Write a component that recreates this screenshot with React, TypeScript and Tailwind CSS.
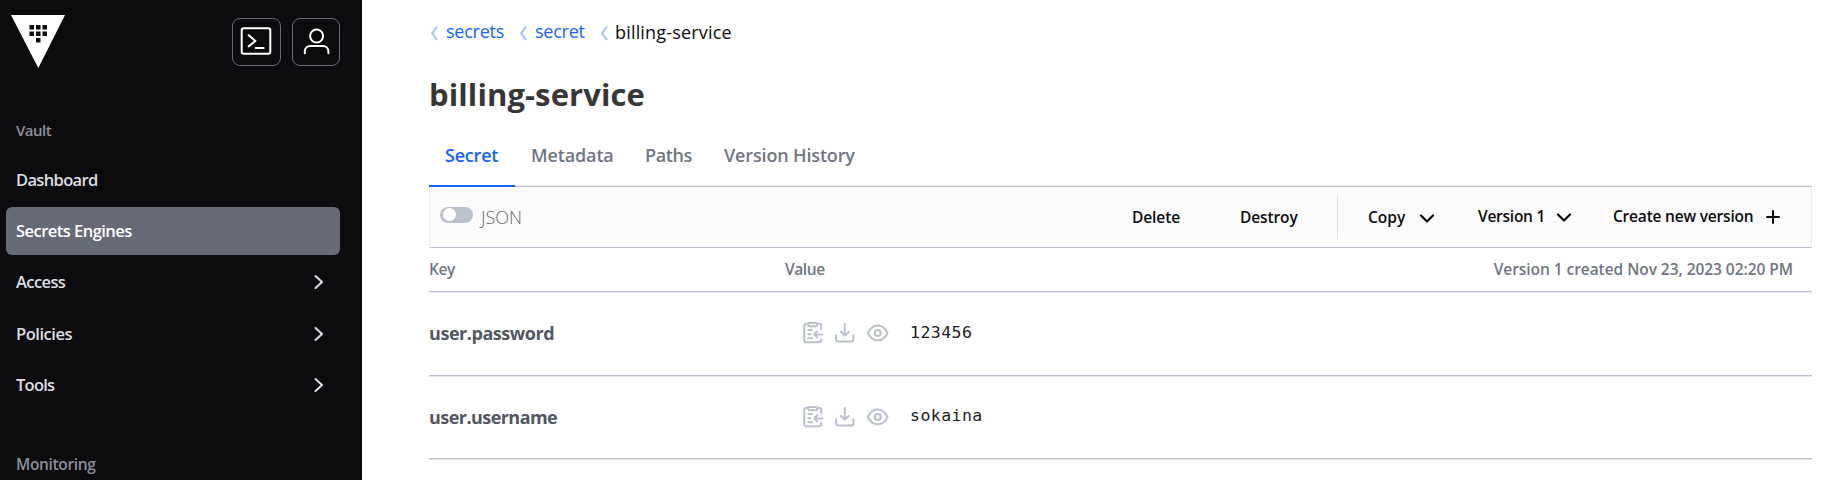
import type { ReactNode } from "react";

function Icon({ w = 24, h = 24, sw = 2, children, className = "" }: { w?: number; h?: number; sw?: number; children: ReactNode; className?: string }) {
  return (
    <svg width={w} height={h} viewBox={`0 0 ${w} ${h}`} fill="none" stroke="currentColor" strokeWidth={sw} strokeLinecap="round" strokeLinejoin="round" className={`block shrink-0 ${className}`}>
      {children}
    </svg>
  );
}

function VaultLogo() {
  const cells = [
    [18.5, 10], [25, 10], [31.5, 10],
    [18.5, 16.5], [25, 16.5], [31.5, 16.5],
    [25, 23],
  ];
  return (
    <svg width="54" height="53" viewBox="0 0 54 53" className="block">
      <path d="M0 0H54L27.3 53Z" fill="#fff" />
      {cells.map(([x, y]) => (
        <rect key={`${x}-${y}`} x={x} y={y} width="4.5" height="4.5" fill="#0c0c0e" />
      ))}
    </svg>
  );
}

function NavItem({ label, className, active, arrow }: { label: string; className: string; active?: boolean; arrow?: boolean }) {
  return (
    <a className={`flex h-12 w-[334px] shrink-0 items-center justify-between rounded-md pr-[16px] pl-[10px] text-[16.5px] leading-none font-[580] ${active ? "bg-[#656a76] text-white" : "text-[#dedfe3]"} ${className}`}>
      <span className="whitespace-nowrap">{label}</span>
      {arrow && (
        <Icon w={10} h={16} className="text-[#dedfe3]">
          <path d="M1.5 2L8 8L1.5 14" />
        </Icon>
      )}
    </a>
  );
}

function Crumb({ label, className, current }: { label: string; className: string; current?: boolean }) {
  return (
    <li className="flex items-center">
      <Icon w={9} h={16} sw={2.3} className="mt-[4px] text-[#b3c8fb]">
        <path d="M8 1.5L3.2 8.3L8 15" strokeLinecap="butt" />
      </Icon>
      <span className={`whitespace-nowrap ${current ? "pt-[2px] text-[#0c0c0e]" : "text-[#1563ff]"} ${className}`}>{label}</span>
    </li>
  );
}

function ChevronDown({ className }: { className: string }) {
  return (
    <Icon w={16} h={12} sw={2.2} className={className}>
      <path d="M2 2.5L8 8.5L14 2.5" />
    </Icon>
  );
}

function SecretRow({ name, nameClass, value, className }: { name: string; nameClass: string; value: string; className: string }) {
  return (
    <div className={`flex items-center pb-[4px] shadow-[inset_0_-1px_0_#e4e7ec,inset_0_-2px_0_#bac1cc] ${className}`}>
      <div className={`w-[372px] text-[18px] leading-none font-[680] whitespace-nowrap text-[#525761] ${nameClass}`}>{name}</div>
      <div className="flex items-center gap-2 text-[#bac1cc]">
        <Icon>
          <path d="M7.2 2.8H5.2A2 2 0 0 0 3.2 4.8V19.2A2 2 0 0 0 5.2 21.2H18.2A2 2 0 0 0 20.2 19.2V18.3M16.2 2.8H18.2A2 2 0 0 1 20.2 4.8V8.3" />
          <rect x="7.2" y="1.9" width="9" height="3.4" rx="1.4" />
          <path d="M7.3 9.1H11M7.3 13.2H9.4M7.3 17.3H11.3M21.2 13.4H13.2M16.2 10.3L13.2 13.4L16.2 16.5" />
        </Icon>
        <Icon>
          <path d="M3.1 14.2V18.6A2 2 0 0 0 5.1 20.6H18.4A2 2 0 0 0 20.4 18.6V14.2M11.8 3V14.4M7.8 10.7L11.8 14.6L15.8 10.7" />
        </Icon>
        <Icon>
          <path d="M2.9 12C5 7.4 8.4 4.6 12.7 4.6S20.4 7.4 22.5 12C20.4 16.6 17 19.3 12.7 19.3S5 16.6 2.9 12Z" />
          <circle cx="12.7" cy="12" r="3" />
        </Icon>
      </div>
      <span className="pl-[21px] font-['DejaVu_Sans_Mono',monospace] text-[16.5px] leading-none tracking-[0.45px] whitespace-nowrap text-[#1a1c20]">{value}</span>
    </div>
  );
}

export default function App() {
  return (
    <div className="flex h-[480px] w-[1843px] overflow-hidden bg-white font-['Open_Sans','Noto_Sans',sans-serif]">
      <aside className="flex w-[362px] shrink-0 flex-col overflow-hidden bg-[#0c0c0e]">
        <header className="flex h-[106px] shrink-0 items-start justify-between pr-[22px] pl-[11px]">
          <div className="pt-[15px]"><VaultLogo /></div>
          <div className="flex gap-[11px] pt-[18px] text-white">
            <button className="flex h-12 w-[49px] items-center justify-center rounded-lg border border-[#656a76]">
              <Icon w={32} h={30} className="mt-[-2px] ml-[-1px]">
                <rect x="1.7" y="2.2" width="28.6" height="25.6" rx="2" />
                <path d="M8.7 9.2L15.4 15L8.7 20.4M15.8 22H23.6" />
              </Icon>
            </button>
            <button className="flex h-12 w-12 items-center justify-center rounded-lg border border-[#656a76]">
              <Icon w={28} h={28} className="mt-[-2px]">
                <circle cx="14.6" cy="9" r="6.5" />
                <path d="M2.8 26.3V24.2A5.4 5.4 0 0 1 8.2 19H21A5.4 5.4 0 0 1 26.4 24.2V26.3" />
              </Icon>
            </button>
          </div>
        </header>
        <div className="flex h-12 shrink-0 items-center pl-[16px] text-[15px] leading-none font-[540] tracking-[-0.5px] text-[#8c909c]">Vault</div>
        <nav className="flex shrink-0 flex-col pl-[6px]">
          <NavItem label="Dashboard" className="mt-[2px] tracking-[-0.65px]" />
          <NavItem label="Secrets Engines" active className="mt-[3px] tracking-[-0.53px]" />
          <NavItem label="Access" arrow className="mt-[3px] tracking-[-0.6px]" />
          <NavItem label="Policies" arrow className="mt-[4px] tracking-[-0.45px]" />
          <NavItem label="Tools" arrow className="mt-[3px] tracking-[-0.75px]" />
        </nav>
        <div className="mt-[32px] flex h-12 shrink-0 items-center pl-[16px] text-[15.5px] leading-none font-[540] tracking-[-0.35px] text-[#8c909c]">Monitoring</div>
      </aside>

      <main className="flex min-w-0 flex-1 flex-col pr-[31px] pl-[67px]">
        <ul className="flex h-[62px] shrink-0 items-center text-[18px] leading-none font-[400]">
          <Crumb label="secrets" className="w-[73px] pl-[8px] tracking-[-0.25px]" />
          <li className="w-[7px]" />
          <Crumb label="secret" className="w-[65px] pl-[8px] tracking-[-0.25px]" />
          <li className="w-[7px]" />
          <Crumb label="billing-service" current className="pl-[7px] tracking-[0.18px]" />
        </ul>
        <h1 className="flex h-16 shrink-0 items-center text-[31px] leading-none font-bold tracking-[0.1px] text-[#373737]">billing-service</h1>

        <div className="flex h-[61px] shrink-0 text-[18px] leading-[58px] font-[570] whitespace-nowrap text-[#6f7682] shadow-[inset_0_-1px_0_#bac1cc,inset_0_-2px_0_#e9ebef]">
          <a className="w-[86px] border-b-2 border-[#1563ff] pl-[16px] tracking-[-0.2px] text-[#1563ff]">Secret</a>
          <a className="w-[115px] pl-[16px] tracking-[-0.13px]">Metadata</a>
          <a className="w-[79px] pl-[15px] tracking-[-0.4px]">Paths</a>
          <a className="pl-[15px] tracking-[-0.15px]">Version History</a>
        </div>

        <div className="flex h-[61px] shrink-0 items-center border border-t-0 border-[#ebeef2] border-b-[#bac1cc] bg-[#fbfbfb] text-[15.5px] leading-none font-[550] whitespace-nowrap text-[#0c0c0e]">
          <div className="flex flex-1 items-center">
            <span className="mt-[-5px] ml-[10px] flex h-4 w-[33px] items-center rounded-full bg-[#bac1cc] pl-[3px]">
              <span className="size-[13px] rounded-full bg-white" />
            </span>
            <span className="pl-[8px] text-[18px] font-[320] text-[#5f6570]">JSON</span>
          </div>
          <div className="w-[108px] pt-px tracking-[-0.1px]">Delete</div>
          <div className="w-[97px] pt-px tracking-[-0.12px]">Destroy</div>
          <div className="h-[44px] w-px bg-[#dcdee2]" />
          <div className="flex w-[140px] items-center pt-px pl-[30px]">
            <span className="w-[51px]">Copy</span>
            <ChevronDown className="mt-[3px]" />
          </div>
          <div className="flex w-[135px] items-center">
            <span className="w-[78px] tracking-[-0.25px]">Version 1</span>
            <ChevronDown className="mt-[2px]" />
          </div>
          <div className="flex w-[198px] items-center">
            <span className="w-[152px] tracking-[-0.2px]">Create new version</span>
            <Icon w={16} h={16}>
              <path d="M2 8H14M8 2V14" />
            </Icon>
          </div>
        </div>

        <div className="flex h-[45px] shrink-0 items-center pb-[1px] text-[15.5px] leading-none font-[550] whitespace-nowrap text-[#6f7682] shadow-[inset_0_-1px_0_#e4e7ec,inset_0_-2px_0_#bac1cc]">
          <div className="w-[356px] tracking-[-0.4px]">Key</div>
          <div className="flex-1 tracking-[-0.4px]">Value</div>
          <div className="pr-[19px] tracking-[-0.05px]">Version 1 created Nov 23, 2023 02:20 PM</div>
        </div>
        <SecretRow name="user.password" nameClass="tracking-[-0.45px]" value="123456" className="h-[84px] shrink-0" />
        <SecretRow name="user.username" nameClass="tracking-[-0.55px]" value="sokaina" className="h-[83px] shrink-0" />
      </main>
    </div>
  );
}
